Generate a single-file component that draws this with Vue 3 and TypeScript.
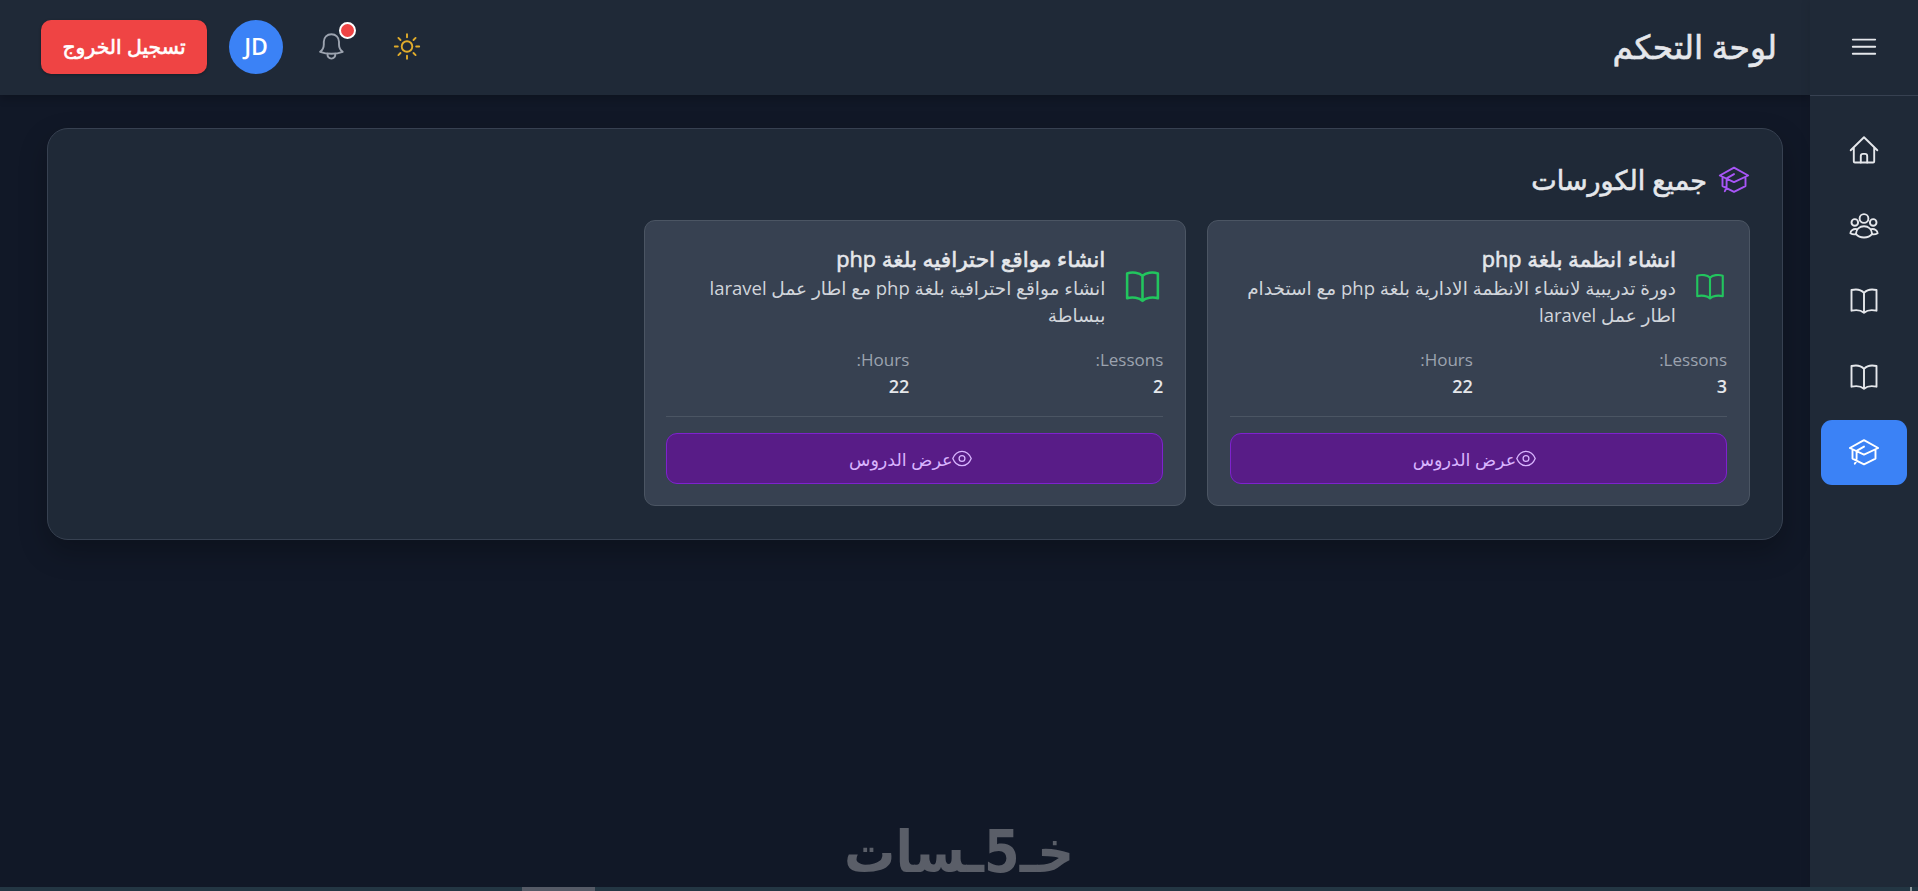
<script setup lang="ts">
import { ref } from 'vue';

interface Course {
  id: number;
  title: string;
  description: string[];
  lessons: number;
  hours: number;
  iconWidth: number;
}

type IconName = 'home' | 'users' | 'book' | 'cap';

interface NavItem {
  id: string;
  icon: IconName;
  label: string;
}

const navItems: NavItem[] = [
  { id: 'home', icon: 'home', label: 'home' },
  { id: 'users', icon: 'users', label: 'users' },
  { id: 'categories', icon: 'book', label: 'categories' },
  { id: 'lessons', icon: 'book', label: 'lessons' },
  { id: 'courses', icon: 'cap', label: 'courses' },
];

const courses: Course[] = [
  {
    id: 1,
    title: 'انشاء انظمة بلغة php',
    description: ['دورة تدريبية لانشاء الانظمة الادارية بلغة php مع استخدام', 'اطار عمل laravel'],
    lessons: 3,
    hours: 22,
    iconWidth: 34,
  },
  {
    id: 2,
    title: 'انشاء مواقع احترافيه بلغة php',
    description: ['انشاء مواقع احترافية بلغة php مع اطار عمل laravel', 'ببساطة'],
    lessons: 2,
    hours: 22,
    iconWidth: 41,
  },
];

const active = ref('courses');
</script>

<template>
  <div class="app" dir="rtl">
    <aside class="sidebar">
      <div class="sidebar__head">
        <svg width="28" height="28" viewBox="0 0 28 28" class="stroke">
          <path d="M2.8 6.6h22.4M2.8 13.7h22.4M2.8 20.7h22.4" />
        </svg>
      </div>
      <nav class="sidebar__nav">
        <button
          v-for="item in navItems"
          :key="item.id"
          class="nav-item"
          :class="{ 'nav-item--active': active === item.id }"
          :aria-label="item.label"
          @click="active = item.id"
        >
          <svg width="30" height="30" viewBox="0 0 30 30" class="stroke">
            <template v-if="item.icon === 'home'">
              <path d="M1.7 15.3 15 2.3l13.3 13M4.8 12.6v13.8c0 .7.5 1.1 1.1 1.1h18.2c.6 0 1.1-.4 1.1-1.1V12.6" />
              <path d="M11.8 27.5v-6.4c0-1.4.9-2.2 2.2-2.2h2c1.3 0 2.2.8 2.2 2.2v6.4" />
            </template>
            <template v-else-if="item.icon === 'users'">
              <circle cx="15" cy="7.5" r="4.4" />
              <circle cx="5.8" cy="11.4" r="3.3" />
              <circle cx="24.2" cy="11.4" r="3.3" />
              <path d="M15 15.3c-4.5 0-7.8 3-8.1 7.6 1.9 2.4 5 3.6 8.1 3.6s6.2-1.2 8.1-3.6c-.3-4.6-3.6-7.6-8.1-7.6z" />
              <path d="M8 18.2c-3.8-.7-6.5 1.3-6.6 4.1 1.5.9 3.2 1.2 5.1 1M22 18.2c3.8-.7 6.5 1.3 6.6 4.1-1.5.9-3.2 1.2-5.1 1" />
            </template>
            <path
              v-else-if="item.icon === 'book'"
              d="M15 6.800C12 3.600 7 2.900 2.500 4v20.700c4.500-1.100 9.500-.5 12.500 2.100 3-2.600 8-3.200 12.500-2.100V4C23 2.900 18 3.600 15 6.800zv20"
            />
            <path
              v-else
              d="M15 3.200.8 11 15 17.600 29.200 11zM3.500 12.700v8.900L15 27.400l11.500-5.800v-8.900M15 9.600l-7.400 4.200v7.700c0 1.800-.6 3.700-1.800 5.300"
            />
          </svg>
        </button>
      </nav>
    </aside>

    <div class="content">
      <header class="topbar">
        <h1 class="topbar__title">لوحة التحكم</h1>
        <div class="topbar__actions">
          <button class="icon-btn icon-btn--sun" aria-label="theme">
            <svg width="28" height="28" viewBox="0 0 28 28" class="stroke">
              <circle cx="14" cy="13.500" r="5.300" />
              <path d="M14 1.300v3M14 22.700v3M1.800 13.500h3M23.200 13.500h3M5.400 4.900l2.100 2.100M20.500 20l2.100 2.100M5.400 22.100l2.100-2.100M20.500 7l2.100-2.100" />
            </svg>
          </button>
          <button class="icon-btn icon-btn--bell" aria-label="notifications">
            <svg width="28" height="28" viewBox="0 0 28 28" class="stroke">
              <path d="M13.400 1.200c-4.400 0-7.600 3.300-7.600 7.500v2.800c0 3-1.100 5.400-3.700 7.300 3.300 1.300 7.200 2 11.300 2s8-.7 11.300-2c-2.600-1.900-3.700-4.300-3.700-7.300V8.700c0-4.200-3.200-7.500-7.600-7.500z" />
              <path d="M9.600 20.800a3.900 3.900 0 1 0 7.600 0" />
            </svg>
            <span class="badge"></span>
          </button>
          <div class="avatar">JD</div>
          <button class="logout">تسجيل الخروج</button>
        </div>
      </header>

      <main class="main">
        <section class="panel">
          <h2 class="panel__title">
            <svg width="32" height="32" viewBox="-1 -1.500 32 32" class="stroke">
              <path d="M15 3.200.8 11 15 17.600 29.200 11zM3.500 12.700v8.900L15 27.400l11.500-5.800v-8.900M15 9.600l-7.400 4.200v7.700c0 1.800-.6 3.700-1.800 5.300" />
            </svg>
            <span>جميع الكورسات</span>
          </h2>
          <div class="grid">
            <article v-for="course in courses" :key="course.id" class="card">
              <div class="card__head">
                <svg class="card__icon" :style="{ width: course.iconWidth + 'px' }" viewBox="0 0.400 24 24">
                  <path d="M12 6.250C10.200 4.300 6 3.700 3 4.800v14.500c3-.9 7.200-.3 9 1.500 1.800-1.800 6-2.400 9-1.500V4.800C18 3.700 13.800 4.300 12 6.250zv14.500" />
                </svg>
                <div>
                  <h3 class="card__title">{{ course.title }}</h3>
                  <p v-for="line in course.description" :key="line" class="card__text">{{ line }}</p>
                </div>
              </div>
              <dl class="card__stats">
                <div>
                  <dt>Lessons:</dt>
                  <dd>{{ course.lessons }}</dd>
                </div>
                <div>
                  <dt>Hours:</dt>
                  <dd>{{ course.hours }}</dd>
                </div>
              </dl>
              <div class="card__foot">
                <button class="view-btn">
                  <svg width="20" height="20" viewBox="0 0 20 20">
                    <path d="M.8 9.500C2.600 5 6 2.300 10 2.300S17.400 5 19.200 9.500c-1.800 4.500-5.200 7.200-9.200 7.200S2.600 14 .8 9.500z" />
                    <circle cx="10" cy="9.500" r="2.900" />
                  </svg>
                  <span>عرض الدروس</span>
                </button>
              </div>
            </article>
          </div>
        </section>
      </main>
    </div>

    <svg class="watermark" width="240" height="84" viewBox="0 0 240 84">
      <text x="236" y="65" textLength="230" lengthAdjust="spacingAndGlyphs">خـ5ـسات</text>
    </svg>
    <div class="bottom-bar"><span class="bottom-bar__thumb"></span><span class="bottom-bar__mark"></span></div>
  </div>
</template>

<style>
body {
  background: #111827;
}
</style>

<style scoped>
.app {
  position: relative;
  display: flex;
  height: 891px;
  overflow: hidden;
  background: #111827;
  color: #e5e7eb;
  font-family: 'Open Sans', 'DejaVu Sans', sans-serif;
  font-size: 18.5px;
}

h1,
h2,
h3,
p,
dl,
dd {
  margin: 0;
}

/* the Arabic face only has regular and bold, a thin stroke gives the weight in between */
h1,
h2,
h3,
.logout {
  font-weight: 400;
  -webkit-text-stroke: 0.6px currentColor;
}

button {
  border: 0;
  padding: 0;
  font-family: inherit;
  cursor: pointer;
}

svg {
  display: block;
  flex-shrink: 0;
}

.stroke {
  fill: none;
  stroke: currentColor;
  stroke-width: 1.9;
  stroke-linecap: round;
  stroke-linejoin: round;
}

.sidebar {
  width: 108px;
  flex-shrink: 0;
  background: #1f2937;
  box-shadow: 0 0 10px rgba(0, 0, 0, 0.1);
  z-index: 2;
}

.sidebar__head {
  display: flex;
  align-items: center;
  justify-content: center;
  height: 96px;
  padding-bottom: 2px;
  box-sizing: border-box;
  border-bottom: 1px solid #374151;
}

.sidebar__nav {
  display: flex;
  flex-direction: column;
  gap: 10.8px;
  padding: 21.6px 11px;
}

.nav-item {
  display: flex;
  align-items: center;
  justify-content: center;
  height: 64.8px;
  border-radius: 11px;
  background: transparent;
  color: #e5e7eb;
}

.nav-item--active {
  background: #3b82f6;
  color: #fff;
}

.content {
  flex: 1;
  min-width: 0;
}

.topbar {
  display: flex;
  align-items: center;
  justify-content: space-between;
  height: 95px;
  box-sizing: border-box;
  padding: 0 33px 1px 41px;
  background: #1f2937;
  box-shadow: 0 4px 8px rgba(0, 0, 0, 0.2);
}

.topbar__title {
  font-size: 33px;
  line-height: 40px;
}

.topbar__actions {
  display: flex;
  align-items: center;
  gap: 22px;
}

.icon-btn {
  position: relative;
  display: flex;
  align-items: center;
  justify-content: center;
  width: 53px;
  height: 54px;
  background: transparent;
}

.icon-btn--sun {
  color: #e0ac2b;
}

.icon-btn--bell {
  color: #9ca3af;
}

.badge {
  position: absolute;
  top: 2px;
  right: 2px;
  width: 17px;
  height: 17px;
  box-sizing: border-box;
  border: 2.5px solid #fff;
  border-radius: 50%;
  background: #ef4444;
}

.avatar {
  display: flex;
  align-items: center;
  justify-content: center;
  width: 54px;
  height: 54px;
  padding-bottom: 2px;
  box-sizing: border-box;
  border-radius: 50%;
  background: #3b82f6;
  color: #fff;
  font-size: 23px;
  font-weight: 600;
}

.logout {
  width: 166px;
  height: 54px;
  padding-bottom: 2px;
  border-radius: 10px;
  background: #ef4444;
  color: #fff;
  font-size: 20.4px;
  box-shadow: 0 1px 3px rgba(0, 0, 0, 0.3);
}

.main {
  padding: 33px 27px 0 47px;
}

.panel {
  box-sizing: border-box;
  height: 412px;
  padding: 32px;
  border: 1px solid #374151;
  border-radius: 21px;
  background: #1f2937;
  box-shadow: 0 12px 28px rgba(0, 0, 0, 0.25);
}

.panel__title {
  display: flex;
  align-items: center;
  gap: 11px;
  height: 36px;
  margin-bottom: 23px;
  font-size: 27px;
}

.panel__title svg {
  color: #a855f7;
}

.grid {
  display: grid;
  grid-template-columns: repeat(3, 1fr);
  gap: 21px;
}

.card {
  box-sizing: border-box;
  height: 286px;
  padding: 23px 22px 22px 21.5px;
  border: 1px solid #4b5563;
  border-radius: 11px;
  background: #374151;
}

.card__head {
  display: flex;
  align-items: center;
  gap: 17px;
  height: 84px;
}

.card__icon {
  height: 45px;
  fill: none;
  stroke: #22c55e;
  stroke-width: 1.5;
  stroke-linecap: round;
  stroke-linejoin: round;
}

.card__title {
  height: 30px;
  line-height: 30px;
  font-size: 21.7px;
  white-space: nowrap;
}

.card__text {
  height: 27px;
  line-height: 27px;
  color: #d1d5db;
  white-space: nowrap;
}

.card__stats {
  display: grid;
  grid-template-columns: 1fr 1fr;
  gap: 11px;
  margin-top: 18px;
  line-height: 27px;
}

.card__stats dt {
  color: #9ca3af;
  font-size: 17px;
}

.card__stats dd {
  font-size: 18px;
  font-weight: 600;
}

.card__foot {
  margin-top: 16px;
  padding-top: 16px;
  border-top: 1px solid #4b5563;
}

.view-btn {
  display: flex;
  align-items: center;
  justify-content: center;
  width: 100%;
  height: 51px;
  border: 1px solid #7e22ce;
  border-radius: 11px;
  background: #581c87;
  color: #d8b4fe;
  font-size: 17.5px;
}

.view-btn svg {
  margin-right: 8px;
  fill: none;
  stroke: currentColor;
  stroke-width: 1.3;
}

/* site mark floating over the lower edge of the page */
.watermark {
  position: absolute;
  left: 838px;
  top: 807px;
  z-index: 3;
  overflow: visible;
}

.watermark text {
  fill: #5a5e68;
  font-family: 'DejaVu Sans', sans-serif;
  font-size: 58px;
  font-weight: 700;
}

.bottom-bar {
  position: absolute;
  left: 0;
  right: 0;
  bottom: 0;
  height: 4px;
  background: #233643;
  z-index: 3;
}

.bottom-bar__thumb {
  position: absolute;
  left: 522px;
  width: 73px;
  height: 4px;
  background: #555a66;
}

.bottom-bar__mark {
  position: absolute;
  right: 6px;
  width: 2px;
  height: 4px;
  background: #8b9599;
}
</style>
